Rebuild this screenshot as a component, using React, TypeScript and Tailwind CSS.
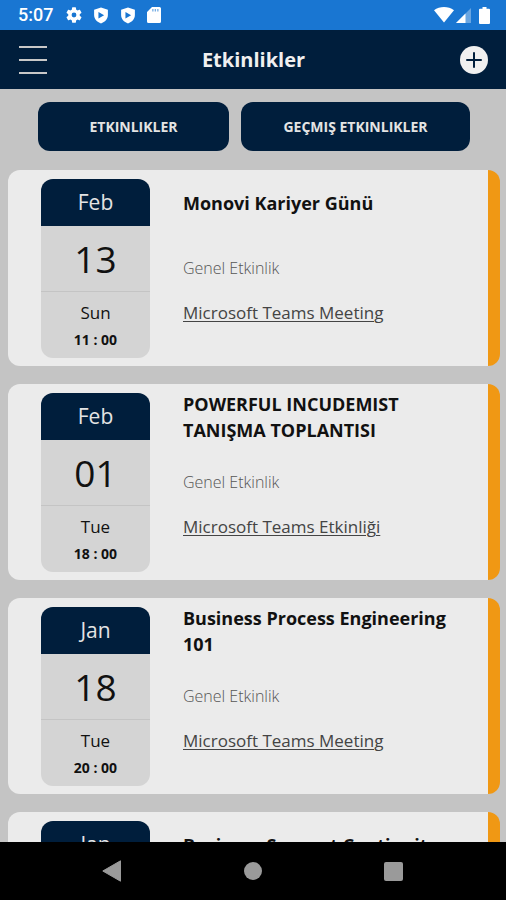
import { Plus } from 'lucide-react';

interface EventItem {
  id: number;
  month: string;
  day: string;
  weekday: string;
  time: string;
  title: string;
  category: string;
  place: string;
}

const events: EventItem[] = [
  { id: 1, month: 'Feb', day: '13', weekday: 'Sun', time: '11 : 00', title: 'Monovi Kariyer Günü', category: 'Genel Etkinlik', place: 'Microsoft Teams Meeting' },
  { id: 2, month: 'Feb', day: '01', weekday: 'Tue', time: '18 : 00', title: 'POWERFUL INCUDEMIST TANIŞMA TOPLANTISI', category: 'Genel Etkinlik', place: 'Microsoft Teams Etkinliği' },
  { id: 3, month: 'Jan', day: '18', weekday: 'Tue', time: '20 : 00', title: 'Business Process Engineering 101', category: 'Genel Etkinlik', place: 'Microsoft Teams Meeting' },
  { id: 4, month: 'Jan', day: '11', weekday: 'Tue', time: '20 : 00', title: 'Business Support Continuity', category: 'Genel Etkinlik', place: 'Microsoft Teams Meeting' },
];

function ShieldIcon() {
  return (
    <svg viewBox="0 0 16 18" className="h-[17px] w-4" fill="currentColor">
      <path fillRule="evenodd" d="M8 .5 15.300 3v5.500c0 4.200-3 7.300-7.300 9C3.700 15.800.7 12.700.7 8.500V3L8 .5ZM5.300 5.300v7l6-3.500-6-3.500Z" />
    </svg>
  );
}

function StatusBar() {
  return (
    <div className="flex h-[30px] shrink-0 items-center justify-between bg-[#1976d2] pr-4 pl-[18px] text-white">
      <div className="flex items-center gap-[11px]">
        <span className="mr-0.5 font-['Roboto',sans-serif] text-lg font-medium">5:07</span>
        <svg viewBox="2 2 20 20" className="size-4" fill="currentColor">
          <path d="M19.140 12.940c.04-.3.060-.61.060-.94 0-.32-.02-.64-.07-.94l2.030-1.580a.49.49 0 0 0 .12-.61l-1.920-3.320a.49.49 0 0 0-.59-.22l-2.390.96a7 7 0 0 0-1.620-.94l-.36-2.540a.48.48 0 0 0-.48-.41h-3.840a.47.47 0 0 0-.47.41l-.36 2.540c-.59.24-1.130.57-1.620.94l-2.390-.96a.48.48 0 0 0-.59.22L2.740 8.870a.47.47 0 0 0 .12.61l2.030 1.580c-.05.3-.09.63-.09.94s.02.64.07.94l-2.030 1.580a.49.49 0 0 0-.12.61l1.920 3.320c.12.22.37.29.59.22l2.390-.96c.5.38 1.030.7 1.620.94l.36 2.540c.05.24.24.41.48.41h3.840c.24 0 .44-.17.47-.41l.36-2.540a7 7 0 0 0 1.620-.94l2.390.96c.22.08.47 0 .59-.22l1.920-3.320a.47.47 0 0 0-.12-.61l-2.010-1.580ZM12 15a3 3 0 1 1 0-6 3 3 0 0 1 0 6Z" />
        </svg>
        <ShieldIcon />
        <ShieldIcon />
        <svg viewBox="0 0 14 16" className="h-4 w-3.5" fill="currentColor">
          <path d="M5 0h7.500A1.500 1.500 0 0 1 14 1.500v13a1.500 1.500 0 0 1-1.500 1.500h-11A1.500 1.500 0 0 1 0 14.500V5l5-5Z" />
          <path d="M5.200 2h1.300v2.500H5.200ZM7.700 2H9v2.500H7.700ZM10.200 2h1.300v2.500h-1.300Z" fill="#1976d2" opacity=".6" />
        </svg>
      </div>
      <div className="flex items-center">
        <svg viewBox="0 0 20 16" className="h-4 w-5" fill="currentColor">
          <path d="M0 3.200C5.800-1 14.200-1 20 3.200L10 15.500 0 3.200Z" />
        </svg>
        <svg viewBox="0 0 15 15" className="ml-0.5 h-[15px] w-[15px]" fill="currentColor">
          <path d="M15 0v15H0L15 0Z" opacity=".35" />
          <path d="M9.500 5.500V15H0l9.500-9.500Z" />
        </svg>
        <svg viewBox="0 0 11 17" className="ml-2 h-[17px] w-[11px]" fill="currentColor">
          <path d="M3.500 0h4v1.800H10a1 1 0 0 1 1 1V16a1 1 0 0 1-1 1H1a1 1 0 0 1-1-1V2.800a1 1 0 0 1 1-1h2.500V0Z" />
        </svg>
      </div>
    </div>
  );
}

function Header() {
  return (
    <header className="flex h-[59px] shrink-0 items-center justify-between bg-[#001e3c] pr-[18px] pl-[19px]">
      <button aria-label="Menu" className="flex w-7 flex-col gap-[11px]">
        <span className="h-0.5 w-full bg-[#c8c8c8]" />
        <span className="h-0.5 w-full bg-[#c8c8c8]" />
        <span className="h-0.5 w-full bg-[#c8c8c8]" />
      </button>
      <h1 className="text-xl font-bold text-[#f0f0f0]">Etkinlikler</h1>
      <button aria-label="Add" className="flex size-7 items-center justify-center rounded-full bg-[#f0f0f0] text-[#001e3c]">
        <Plus className="size-6" strokeWidth={2} />
      </button>
    </header>
  );
}

function EventCard({ event }: { event: EventItem }) {
  return (
    <article className="flex h-[196px] shrink-0 overflow-hidden rounded-xl border-r-12 border-[#f09814] bg-[#ebebeb] pl-[33px]">
      <div className="mt-[9px] mb-2 flex w-[109px] shrink-0 flex-col overflow-hidden rounded-xl bg-[#d4d4d4] text-center text-[#111]">
        <div className="flex h-[47px] shrink-0 items-center justify-center bg-[#001e3c] text-[21px] text-[#e4e4e4]">{event.month}</div>
        <div className="flex h-[66px] shrink-0 items-center justify-center border-b border-[#c4c4c4] text-[37px]">{event.day}</div>
        <div className="mt-2 text-[17px] leading-[26px]">{event.weekday}</div>
        <div className="mt-1 text-sm font-bold">{event.time}</div>
      </div>
      <div className="ml-[33px] flex flex-1 flex-col items-start pt-[7px] pr-6">
        <h2 className="flex h-[52px] items-center text-lg leading-[26px] font-bold text-[#111]">{event.title}</h2>
        <p className="mt-[27px] text-base leading-6 font-light text-[#555]">{event.category}</p>
        <a href="#" className="mt-5 text-[17px] leading-[26px] text-[#444] underline decoration-1 underline-offset-2">{event.place}</a>
      </div>
    </article>
  );
}

export default function App() {
  return (
    <div className="flex h-screen flex-col overflow-hidden bg-[#c4c4c4] font-['Open_Sans',sans-serif]">
      <StatusBar />
      <Header />
      <main className="flex min-h-0 flex-1 flex-col overflow-hidden">
        <div className="flex shrink-0 gap-3 pt-[13px] pr-9 pb-[19px] pl-[38px]">
          <button className="h-[49px] flex-[191] rounded-xl bg-[#001e3c] text-sm font-bold text-[#e4e4e4]">ETKINLIKLER</button>
          <button className="h-[49px] flex-[229] rounded-xl bg-[#001e3c] text-sm font-bold text-[#e4e4e4]">GEÇMIŞ ETKINLIKLER</button>
        </div>
        <div className="flex flex-col gap-[18px] pr-1.5 pl-2">
          {events.map((event) => (
            <EventCard key={event.id} event={event} />
          ))}
        </div>
      </main>
      <nav className="flex h-[58px] shrink-0 items-center justify-center gap-[122px] bg-black pr-0.5 text-[#9a9a9a]">
        <button aria-label="Back">
          <svg viewBox="0 0 20 22" className="h-[22px] w-5" fill="currentColor">
            <path d="M18.500.8v20.400L.8 11 18.500.8Z" stroke="currentColor" strokeLinejoin="round" />
          </svg>
        </button>
        <button aria-label="Home" className="size-[18px] rounded-full bg-[#9a9a9a]" />
        <button aria-label="Recent apps" className="size-[19px] rounded-xs bg-[#9a9a9a]" />
      </nav>
    </div>
  );
}
